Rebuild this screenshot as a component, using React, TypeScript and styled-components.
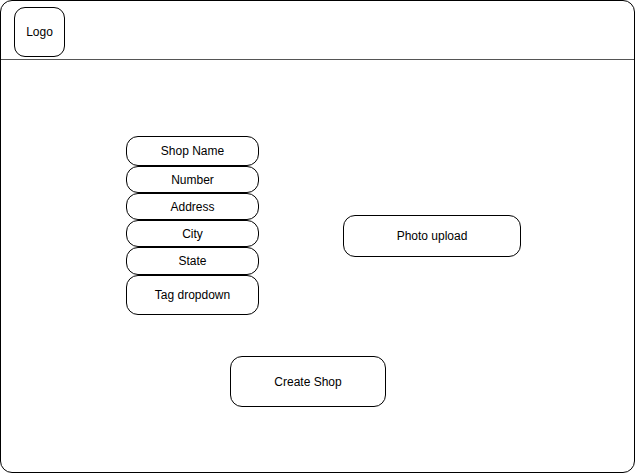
import React from "react";
import styled, { createGlobalStyle } from "styled-components";

const GlobalStyle = createGlobalStyle`
  html, body {
    margin: 0;
    padding: 0;
    background: #fff;
  }
  body {
    font-family: "Liberation Sans", Arial, sans-serif;
    font-size: 12px;
    color: #000;
  }
`;

const Frame = styled.div`
  box-sizing: border-box;
  width: 635px;
  height: 473px;
  border: 1px solid #000;
  border-radius: 12px;
  display: flex;
  flex-direction: column;
  overflow: hidden;
`;

const Header = styled.header`
  box-sizing: border-box;
  height: 59px;
  padding: 6px 0 0 13px;
  border-bottom: 1px solid #555;
`;

const Box = styled.div<{ $w: number; $h: number; $r?: number }>`
  box-sizing: border-box;
  width: ${(p) => p.$w}px;
  height: ${(p) => p.$h}px;
  border: 1px solid #000;
  border-radius: ${(p) => p.$r ?? 12}px;
  display: flex;
  align-items: center;
  justify-content: center;
  background: #fff;
  white-space: nowrap;
`;

const Main = styled.main`
  flex: 1;
  padding: 76px 0 0 125px;
  display: flex;
  flex-direction: column;
`;

const Row = styled.div`
  display: flex;
  align-items: flex-start;
`;

const FieldStack = styled.div`
  display: flex;
  flex-direction: column;
`;

const PhotoSlot = styled.div`
  margin: 79px 0 0 84px;
`;

const SubmitSlot = styled.div`
  margin: 41px 0 0 104px;
`;

const fields: { label: string; h: number }[] = [
  { label: "Shop Name", h: 30 },
  { label: "Number", h: 27 },
  { label: "Address", h: 27 },
  { label: "City", h: 27 },
  { label: "State", h: 28 },
  { label: "Tag dropdown", h: 40 },
];

const App: React.FC = () => {
  return (
    <>
      <GlobalStyle />
      <Frame>
        <Header>
          <Box $w={51} $h={50} $r={11}>Logo</Box>
        </Header>
        <Main>
          <Row>
            <FieldStack>
              {fields.map((f) => (
                <Box key={f.label} $w={133} $h={f.h}>
                  {f.label}
                </Box>
              ))}
            </FieldStack>
            <PhotoSlot>
              <Box $w={178} $h={42}>Photo upload</Box>
            </PhotoSlot>
          </Row>
          <SubmitSlot>
            <Box $w={156} $h={51}>Create Shop</Box>
          </SubmitSlot>
        </Main>
      </Frame>
    </>
  );
};

export default App;
